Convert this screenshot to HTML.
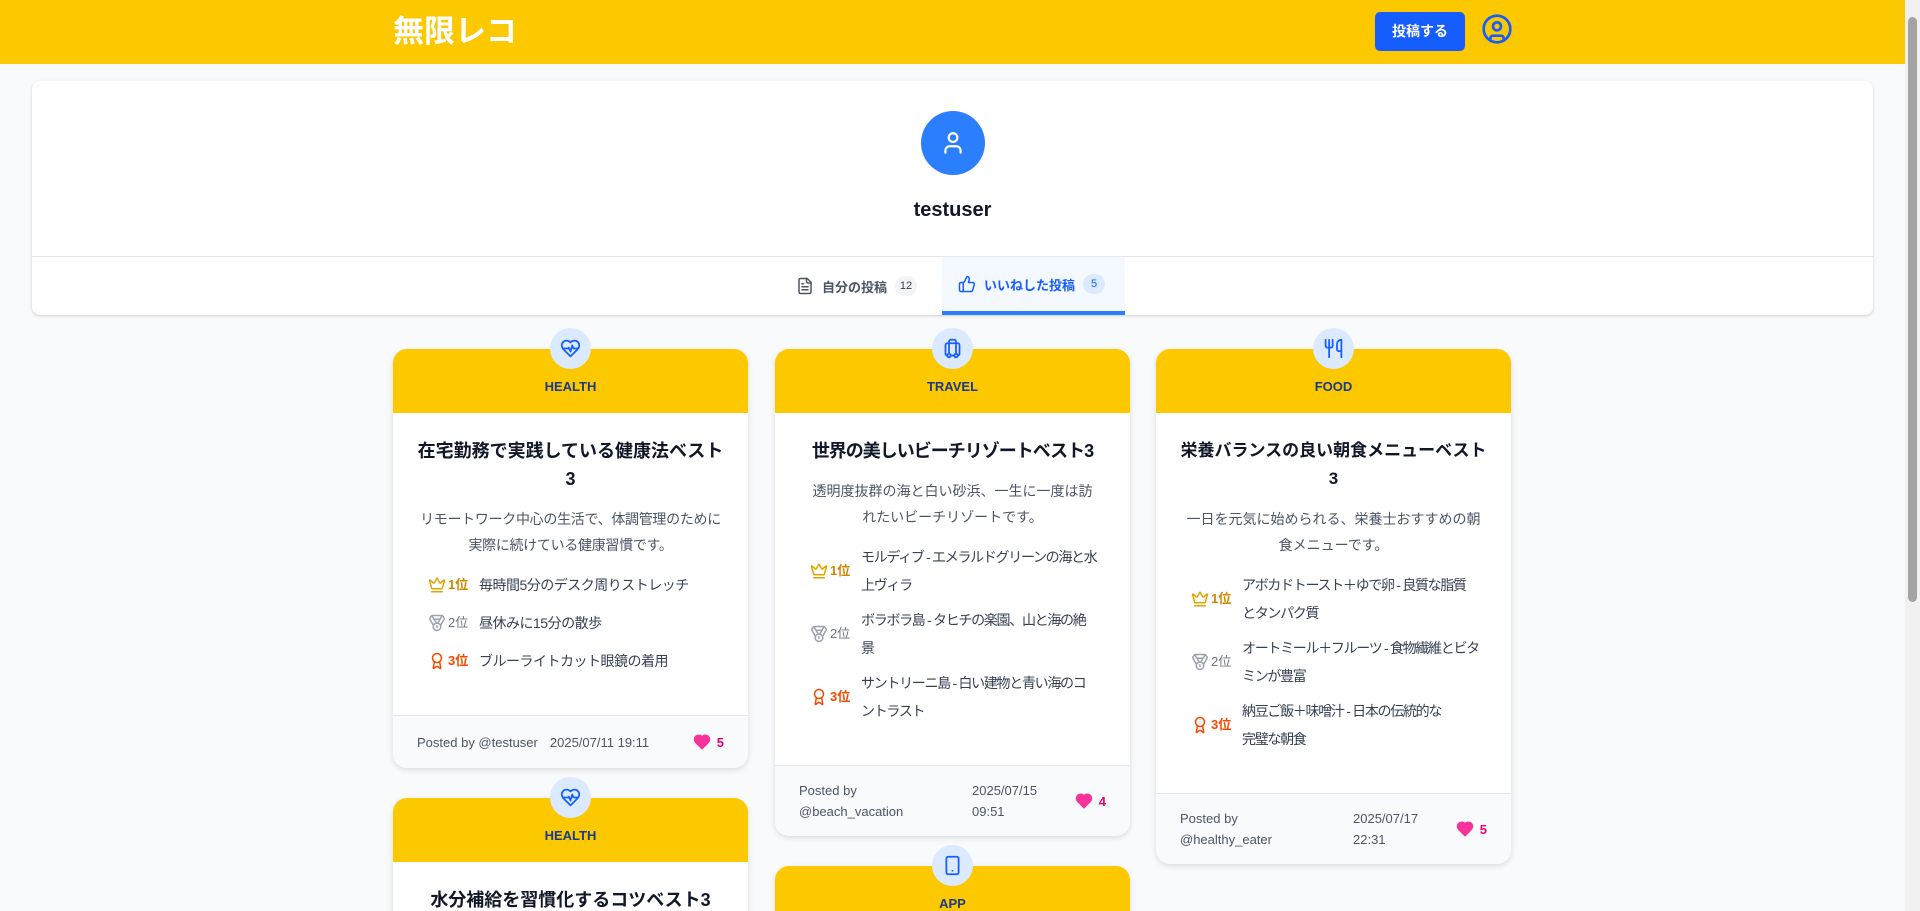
<!DOCTYPE html>
<html><head><meta charset="utf-8">
<style>
*{box-sizing:border-box;margin:0;padding:0}
html,body{width:1920px;height:911px;overflow:hidden}
body{background:#f9fafb;font-family:"Liberation Sans","Noto Sans CJK JP",sans-serif;color:#111827;position:relative}
svg{fill:none;stroke:currentColor;stroke-width:2;stroke-linecap:round;stroke-linejoin:round;display:block}
.hdr{position:absolute;left:0;top:0;width:1905px;height:64px;background:#fcc800}
.logo{position:absolute;left:393px;top:11px;font-size:31px;font-weight:bold;color:#fff;line-height:42px}
.btn{position:absolute;left:1375px;top:12px;width:90px;height:39px;background:#155dfc;border-radius:5px;color:#fff;font-weight:bold;font-size:14px;line-height:39px;text-align:center}
.uicon{position:absolute;left:1481px;top:13px;color:#155dfc}
.sb{position:absolute;left:1905px;top:0;width:15px;height:911px;background:#f1f1f1}
.sb i{position:absolute;left:3px;top:17px;width:9px;height:585px;background:#a3a3a3;border-radius:5px}
.prof{position:absolute;left:32px;top:81px;width:1841px;height:234px;background:#fff;border-radius:8px;box-shadow:0 1px 3px rgba(0,0,0,.12),0 1px 2px rgba(0,0,0,.06)}
.av{position:absolute;left:889px;top:30px;width:64px;height:64px;border-radius:50%;background:#2b7fff;color:#fff}
.av svg{position:absolute;left:19px;top:19px}
.uname{position:absolute;left:0;width:1841px;top:115px;text-align:center;font-size:20px;font-weight:bold;line-height:28px}
.div{position:absolute;left:0;top:175px;width:1841px;height:1px;background:#e5e7eb}
.tab{position:absolute;top:176px;height:58px;display:flex;align-items:center;font-size:13px;font-weight:bold;gap:8px}
.tab1{left:764px;color:#4a5565}
.tab2{left:910px;width:183px;padding-left:16px;color:#155dfc;background:#f4f8ff;border-bottom:4px solid #2b7fff}
.badge{display:inline-block;min-width:22px;height:20px;border-radius:10px;font-size:11px;line-height:20px;text-align:center;font-weight:normal}
.tab1 .badge{background:#f3f4f6;color:#364153}
.tab2 .badge{background:#dbeafe;color:#155dfc}
.col{position:absolute;top:349px;width:355px;display:flex;flex-direction:column;gap:30px}
.card{position:relative;background:#fff;border-radius:14px;box-shadow:0 2px 6px rgba(0,0,0,.12)}
.ch{height:64px;background:#fcc800;border-radius:14px 14px 0 0;text-align:center;font-size:13px;font-weight:bold;color:#1c398e;padding-top:30px;line-height:16px}
.ci{position:absolute;left:157px;top:-21px;width:41px;height:41px;border-radius:50%;background:#dbeafe;color:#155dfc}
.ci svg{position:absolute;left:10px;top:10px}
.cb{padding:24px 24px 40px}
.t{text-align:center;font-size:18px;font-weight:bold;line-height:28px;color:#101828;white-space:nowrap}
.d{text-align:center;font-size:14px;line-height:26px;color:#4a5565;margin-top:13px;white-space:nowrap}
.items{margin-top:13px;padding-left:11px}
.it{display:flex;align-items:center;font-size:14px;line-height:28px;color:#364153;margin-bottom:10px;white-space:nowrap}
.two .it{margin-bottom:7px}
.it:last-child{margin-bottom:0}
.ic{width:18px;flex:none}
.rk{width:26px;margin-left:2px;flex:none;font-weight:bold;font-size:13px}
.tx{margin-left:5px;letter-spacing:-0.5px}
.two .tx{letter-spacing:-1.3px}
.r1 .ic{color:#e2a300}.r1 .rk{color:#d08700}
.r2 .ic{color:#99a1af}.r2 .rk{color:#6a7282;font-weight:normal}
.r3 .ic,.r3 .rk{color:#f54900}
.cf{border-top:1px solid #e5e7eb;background:#f9fafb;border-radius:0 0 14px 14px;display:flex;align-items:center;padding:14px 24px;min-height:53px;font-size:13px;color:#4a5565;line-height:21px}
.cf .p{flex:none}
.cf .dt{margin-left:12px}
.cf .lk{margin-left:auto;display:flex;align-items:center;gap:6px;color:#e60076;font-weight:bold}
.cf .lk svg{fill:#f6339a;stroke:#f6339a}
</style></head><body>
<div class="hdr"><div class="logo">無限レコ</div><div class="btn">投稿する</div>
<div class="uicon"><svg width="32" height="32" viewBox="0 0 24 24"><circle cx="12" cy="12" r="10"/><circle cx="12" cy="10" r="3"/><path d="M7 20.662V19a2 2 0 0 1 2-2h6a2 2 0 0 1 2 2v1.662"/></svg></div></div>
<div class="sb"><i></i></div>
<div class="prof">
<div class="av"><svg width="26" height="26" viewBox="0 0 24 24"><path d="M19 21v-2a4 4 0 0 0-4-4H9a4 4 0 0 0-4 4v2"/><circle cx="12" cy="7" r="4"/></svg></div>
<div class="uname">testuser</div>
<div class="div"></div>
<div class="tab tab1"><svg width="18" height="18" viewBox="0 0 24 24"><path d="M15 2H6a2 2 0 0 0-2 2v16a2 2 0 0 0 2 2h12a2 2 0 0 0 2-2V7Z"/><path d="M14 2v4a2 2 0 0 0 2 2h4"/><path d="M10 9H8"/><path d="M16 13H8"/><path d="M16 17H8"/></svg>自分の投稿<span class="badge">12</span></div>
<div class="tab tab2"><svg width="18" height="18" viewBox="0 0 24 24"><path d="M7 10v12"/><path d="M15 5.88 14 10h5.83a2 2 0 0 1 1.92 2.56l-2.33 8A2 2 0 0 1 17.5 22H4a2 2 0 0 1-2-2v-8a2 2 0 0 1 2-2h2.76a2 2 0 0 0 1.79-1.11L12 2a3.13 3.13 0 0 1 3 3.88Z"/></svg>いいねした投稿<span class="badge">5</span></div>
</div>

<div class="col" style="left:393px">
<div class="card"><div class="ci"><svg width="21" height="21" viewBox="0 0 24 24"><path d="M19 14c1.49-1.46 3-3.21 3-5.5A5.5 5.5 0 0 0 16.5 3c-1.76 0-3 .5-4.5 2-1.5-1.5-2.74-2-4.5-2A5.5 5.5 0 0 0 2 8.5c0 2.3 1.5 4.05 3 5.5l7 7Z"/><path d="M3.22 12H9.5l.5-1 2 4.5 2-7 1.5 3.5h5.27"/></svg></div>
<div class="ch">HEALTH</div>
<div class="cb"><div class="t">在宅勤務で実践している健康法ベスト<br>3</div>
<div class="d" style="letter-spacing:-0.3px">リモートワーク中心の生活で、体調管理のために<br>実際に続けている健康習慣です。</div>
<div class="items">
<div class="it r1"><div class="ic"><svg width="18" height="18" viewBox="0 0 24 24"><path d="M11.562 3.266a.5.5 0 0 1 .876 0L15.39 8.87a1 1 0 0 0 1.516.294L21.183 5.5a.5.5 0 0 1 .798.519l-2.834 10.246a1 1 0 0 1-.956.734H5.81a1 1 0 0 1-.957-.734L2.02 6.02a.5.5 0 0 1 .798-.519l4.276 3.664a1 1 0 0 0 1.516-.294z"/><path d="M5 21h14"/></svg></div><div class="rk">1位</div><div class="tx">毎時間5分のデスク周りストレッチ</div></div>
<div class="it r2"><div class="ic"><svg width="18" height="18" viewBox="0 0 24 24"><path d="M7.21 15 2.66 7.14a2 2 0 0 1 .13-2.2L4.4 2.8A2 2 0 0 1 6 2h12a2 2 0 0 1 1.6.8l1.6 2.14a2 2 0 0 1 .14 2.2L16.79 15"/><path d="M11 12 5.12 2.2"/><path d="m13 12 5.88-9.8"/><path d="M8 7h8"/><circle cx="12" cy="17" r="5"/><path d="M12 18v-2h-.5"/></svg></div><div class="rk">2位</div><div class="tx">昼休みに15分の散歩</div></div>
<div class="it r3"><div class="ic"><svg width="18" height="18" viewBox="0 0 24 24"><path d="m15.477 12.89 1.515 8.526a.5.5 0 0 1-.81.47l-3.58-2.687a1 1 0 0 0-1.197 0l-3.586 2.686a.5.5 0 0 1-.81-.469l1.514-8.526"/><circle cx="12" cy="8" r="6"/></svg></div><div class="rk">3位</div><div class="tx">ブルーライトカット眼鏡の着用</div></div>
</div></div>
<div class="cf"><span class="p">Posted by @testuser</span><span class="dt">2025/07/11 19:11</span><span class="lk"><svg width="18" height="18" viewBox="0 0 24 24"><path d="M19 14c1.49-1.46 3-3.21 3-5.5A5.5 5.5 0 0 0 16.5 3c-1.76 0-3 .5-4.5 2-1.5-1.5-2.74-2-4.5-2A5.5 5.5 0 0 0 2 8.5c0 2.3 1.5 4.05 3 5.5l7 7Z"/></svg>5</span></div>
</div>
<div class="card"><div class="ci"><svg width="21" height="21" viewBox="0 0 24 24"><path d="M19 14c1.49-1.46 3-3.21 3-5.5A5.5 5.5 0 0 0 16.5 3c-1.76 0-3 .5-4.5 2-1.5-1.5-2.74-2-4.5-2A5.5 5.5 0 0 0 2 8.5c0 2.3 1.5 4.05 3 5.5l7 7Z"/><path d="M3.22 12H9.5l.5-1 2 4.5 2-7 1.5 3.5h5.27"/></svg></div>
<div class="ch">HEALTH</div>
<div class="cb"><div class="t">水分補給を習慣化するコツベスト3</div></div></div>
</div>

<div class="col" style="left:775px">
<div class="card"><div class="ci"><svg width="21" height="21" viewBox="0 0 24 24"><path d="M6 20a2 2 0 0 1-2-2V8a2 2 0 0 1 2-2h12a2 2 0 0 1 2 2v10a2 2 0 0 1-2 2"/><path d="M8 18V4a2 2 0 0 1 2-2h4a2 2 0 0 1 2 2v14"/><path d="M10 20h4"/><circle cx="16" cy="20" r="2"/><circle cx="8" cy="20" r="2"/></svg></div>
<div class="ch">TRAVEL</div>
<div class="cb two"><div class="t" style="letter-spacing:-1px">世界の美しいビーチリゾートベスト3</div>
<div class="d">透明度抜群の海と白い砂浜、一生に一度は訪<br>れたいビーチリゾートです。</div>
<div class="items">
<div class="it r1"><div class="ic"><svg width="18" height="18" viewBox="0 0 24 24"><path d="M11.562 3.266a.5.5 0 0 1 .876 0L15.39 8.87a1 1 0 0 0 1.516.294L21.183 5.5a.5.5 0 0 1 .798.519l-2.834 10.246a1 1 0 0 1-.956.734H5.81a1 1 0 0 1-.957-.734L2.02 6.02a.5.5 0 0 1 .798-.519l4.276 3.664a1 1 0 0 0 1.516-.294z"/><path d="M5 21h14"/></svg></div><div class="rk">1位</div><div class="tx">モルディブ - エメラルドグリーンの海と水<br>上ヴィラ</div></div>
<div class="it r2"><div class="ic"><svg width="18" height="18" viewBox="0 0 24 24"><path d="M7.21 15 2.66 7.14a2 2 0 0 1 .13-2.2L4.4 2.8A2 2 0 0 1 6 2h12a2 2 0 0 1 1.6.8l1.6 2.14a2 2 0 0 1 .14 2.2L16.79 15"/><path d="M11 12 5.12 2.2"/><path d="m13 12 5.88-9.8"/><path d="M8 7h8"/><circle cx="12" cy="17" r="5"/><path d="M12 18v-2h-.5"/></svg></div><div class="rk">2位</div><div class="tx">ボラボラ島 - タヒチの楽園、山と海の絶<br>景</div></div>
<div class="it r3"><div class="ic"><svg width="18" height="18" viewBox="0 0 24 24"><path d="m15.477 12.89 1.515 8.526a.5.5 0 0 1-.81.47l-3.58-2.687a1 1 0 0 0-1.197 0l-3.586 2.686a.5.5 0 0 1-.81-.469l1.514-8.526"/><circle cx="12" cy="8" r="6"/></svg></div><div class="rk">3位</div><div class="tx">サントリーニ島 - 白い建物と青い海のコ<br>ントラスト</div></div>
</div></div>
<div class="cf"><span class="p" style="width:165px">Posted by<br>@beach_vacation</span><span class="dt" style="margin-left:8px">2025/07/15<br>09:51</span><span class="lk"><svg width="18" height="18" viewBox="0 0 24 24"><path d="M19 14c1.49-1.46 3-3.21 3-5.5A5.5 5.5 0 0 0 16.5 3c-1.76 0-3 .5-4.5 2-1.5-1.5-2.74-2-4.5-2A5.5 5.5 0 0 0 2 8.5c0 2.3 1.5 4.05 3 5.5l7 7Z"/></svg>4</span></div>
</div>
<div class="card"><div class="ci"><svg width="21" height="21" viewBox="0 0 24 24"><rect x="5" y="2" width="14" height="20" rx="2"/><path d="M12 18h.01"/></svg></div>
<div class="ch">APP</div></div>
</div>

<div class="col" style="left:1156px">
<div class="card"><div class="ci"><svg width="21" height="21" viewBox="0 0 24 24"><path d="M3 2v7c0 1.1.9 2 2 2h4a2 2 0 0 0 2-2V2"/><path d="M7 2v20"/><path d="M21 15V2a5 5 0 0 0-5 5v6c0 1.1.9 2 2 2h3Zm0 0v7"/></svg></div>
<div class="ch">FOOD</div>
<div class="cb two"><div class="t" style="font-size:17px">栄養バランスの良い朝食メニューベスト<br>3</div>
<div class="d">一日を元気に始められる、栄養士おすすめの朝<br>食メニューです。</div>
<div class="items">
<div class="it r1"><div class="ic"><svg width="18" height="18" viewBox="0 0 24 24"><path d="M11.562 3.266a.5.5 0 0 1 .876 0L15.39 8.87a1 1 0 0 0 1.516.294L21.183 5.5a.5.5 0 0 1 .798.519l-2.834 10.246a1 1 0 0 1-.956.734H5.81a1 1 0 0 1-.957-.734L2.02 6.02a.5.5 0 0 1 .798-.519l4.276 3.664a1 1 0 0 0 1.516-.294z"/><path d="M5 21h14"/></svg></div><div class="rk">1位</div><div class="tx">アボカドトースト＋ゆで卵 - 良質な脂質<br>とタンパク質</div></div>
<div class="it r2"><div class="ic"><svg width="18" height="18" viewBox="0 0 24 24"><path d="M7.21 15 2.66 7.14a2 2 0 0 1 .13-2.2L4.4 2.8A2 2 0 0 1 6 2h12a2 2 0 0 1 1.6.8l1.6 2.14a2 2 0 0 1 .14 2.2L16.79 15"/><path d="M11 12 5.12 2.2"/><path d="m13 12 5.88-9.8"/><path d="M8 7h8"/><circle cx="12" cy="17" r="5"/><path d="M12 18v-2h-.5"/></svg></div><div class="rk">2位</div><div class="tx">オートミール＋フルーツ - 食物繊維とビタ<br>ミンが豊富</div></div>
<div class="it r3"><div class="ic"><svg width="18" height="18" viewBox="0 0 24 24"><path d="m15.477 12.89 1.515 8.526a.5.5 0 0 1-.81.47l-3.58-2.687a1 1 0 0 0-1.197 0l-3.586 2.686a.5.5 0 0 1-.81-.469l1.514-8.526"/><circle cx="12" cy="8" r="6"/></svg></div><div class="rk">3位</div><div class="tx">納豆ご飯＋味噌汁 - 日本の伝統的な<br>完璧な朝食</div></div>
</div></div>
<div class="cf"><span class="p" style="width:165px">Posted by<br>@healthy_eater</span><span class="dt" style="margin-left:8px">2025/07/17<br>22:31</span><span class="lk"><svg width="18" height="18" viewBox="0 0 24 24"><path d="M19 14c1.49-1.46 3-3.21 3-5.5A5.5 5.5 0 0 0 16.5 3c-1.76 0-3 .5-4.5 2-1.5-1.5-2.74-2-4.5-2A5.5 5.5 0 0 0 2 8.5c0 2.3 1.5 4.05 3 5.5l7 7Z"/></svg>5</span></div>
</div>
</div>
</body></html>
